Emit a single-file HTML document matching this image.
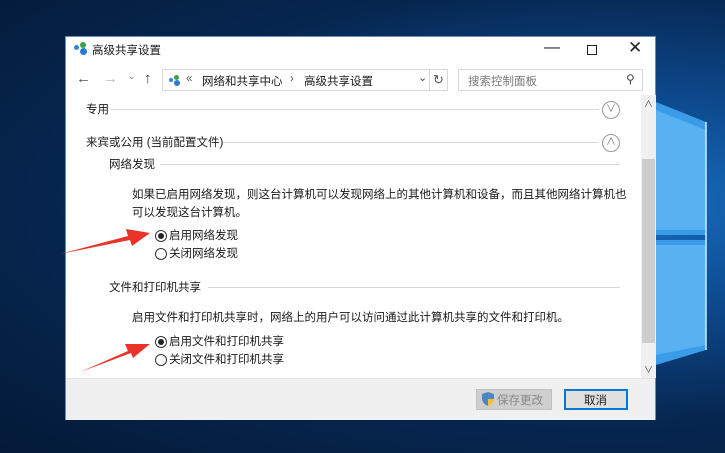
<!DOCTYPE html>
<html><head><meta charset="utf-8"><style>
*{margin:0;padding:0;box-sizing:border-box}
body{width:725px;height:453px;overflow:hidden;position:relative;font-family:"Liberation Sans","Noto Sans CJK SC",sans-serif;font-size:11.5px;color:#1a1a1a;
background:radial-gradient(ellipse at 85% 45%,#1a6fc0 0%,#0d4a8e 30%,#06264f 62%,#041a38 100%)}
.abs{position:absolute}
.win{left:65px;top:36px;width:591px;height:384px;background:#fff;border:1px solid #6b8cb4}
.t{position:absolute;white-space:nowrap}
.line{position:absolute;height:1px;background:#d8d8d8}
.circ{position:absolute;width:18px;height:18px;border:1px solid #999;border-radius:50%;color:#777;font-size:10px;text-align:center;line-height:15px}
.radio{position:absolute;width:12px;height:12px;border:1px solid #333;border-radius:50%;background:#fff}
.radio.on::after{content:"";position:absolute;left:2px;top:2px;width:6px;height:6px;border-radius:50%;background:#222}
</style></head><body>
<svg class="abs" style="left:656px;top:90px" width="69" height="290">
<polygon points="0,12 50,32 50,145 0,145" fill="#3a9be8"/>
<polygon points="0,150 50,150 50,260 0,275" fill="#3a9be8"/>
<polygon points="0,20 50,40 50,140 0,140" fill="#6cc0f5" opacity=".6"/>
<polygon points="0,155 50,155 50,255 0,265" fill="#6cc0f5" opacity=".6"/>
<line x1="50" y1="32" x2="50" y2="260" stroke="#cdeeff" stroke-width="1.5"/>
</svg>
<div class="abs win">
 <div class="abs" style="left:8px;top:8px;width:5px;height:5px;border-radius:50%;background:#2a8ad8"></div>
 <div class="abs" style="left:14px;top:5px;width:6px;height:6px;border-radius:50%;background:#3aa04a"></div>
 <div class="abs" style="left:14px;top:11px;width:7px;height:7px;border-radius:50%;background:#2a7ad0"></div>
 <div class="t" style="left:26px;top:5px">高级共享设置</div>
 <div class="t" style="left:478px;top:2px;font-size:16px;color:#222">—</div>
 <div class="abs" style="left:521px;top:8px;width:10px;height:10px;border:1px solid #222"></div>
 <div class="t" style="left:562px;top:1px;font-size:17px;color:#222">✕</div>
 <div class="t" style="left:10px;top:33px;font-size:15px;color:#555">←</div>
 <div class="t" style="left:37px;top:33px;font-size:15px;color:#bbb">→</div>
 <div class="t" style="left:62px;top:34px;font-size:9px;color:#777">⌄</div>
 <div class="t" style="left:78px;top:33px;font-size:15px;color:#444">↑</div>
 <div class="abs" style="left:96px;top:32px;width:286px;height:22px;border:1px solid #d9d9d9"></div>
 <div class="abs" style="left:103px;top:41px;width:4px;height:4px;border-radius:50%;background:#2a8ad8"></div>
 <div class="abs" style="left:108px;top:38px;width:5px;height:5px;border-radius:50%;background:#3aa04a"></div>
 <div class="abs" style="left:108px;top:43px;width:6px;height:6px;border-radius:50%;background:#2a7ad0"></div>
 <div class="t" style="left:120px;top:36px;color:#555">«</div>
 <div class="t" style="left:136px;top:36px">网络和共享中心</div>
 <div class="t" style="left:224px;top:36px;color:#555">›</div>
 <div class="t" style="left:238px;top:36px">高级共享设置</div>
 <div class="t" style="left:352px;top:34px;font-size:11px;color:#444">⌄</div>
 <div class="abs" style="left:363px;top:32px;width:1px;height:22px;background:#d9d9d9"></div>
 <div class="t" style="left:367px;top:35px;font-size:13px;color:#555">↻</div>
 <div class="abs" style="left:392px;top:32px;width:185px;height:22px;border:1px solid #d9d9d9"></div>
 <div class="t" style="left:402px;top:36px;color:#777">搜索控制面板</div>
 <div class="t" style="left:560px;top:35px;font-size:12px;color:#444">⚲</div>
 <div class="t" style="left:20px;top:64px">专用</div>
 <div class="line" style="left:45px;top:72px;width:488px"></div>
 <div class="circ" style="left:536px;top:64px">∨</div>
 <div class="t" style="left:20px;top:97px">来宾或公用 (当前配置文件)</div>
 <div class="line" style="left:157px;top:105px;width:376px"></div>
 <div class="circ" style="left:536px;top:97px">∧</div>
 <div class="t" style="left:43px;top:119px">网络发现</div>
 <div class="line" style="left:94px;top:127px;width:460px"></div>
 <div class="t" style="left:66px;top:149px">如果已启用网络发现，则这台计算机可以发现网络上的其他计算机和设备，而且其他网络计算机也</div>
 <div class="t" style="left:66px;top:167px">可以发现这台计算机。</div>
 <div class="radio on" style="left:89px;top:193px"></div>
 <div class="t" style="left:103px;top:190px">启用网络发现</div>
 <div class="radio" style="left:89px;top:211px"></div>
 <div class="t" style="left:103px;top:208px">关闭网络发现</div>
 <div class="t" style="left:43px;top:242px">文件和打印机共享</div>
 <div class="line" style="left:142px;top:250px;width:412px"></div>
 <div class="t" style="left:66px;top:272px">启用文件和打印机共享时，网络上的用户可以访问通过此计算机共享的文件和打印机。</div>
 <div class="radio on" style="left:89px;top:299px"></div>
 <div class="t" style="left:103px;top:296px">启用文件和打印机共享</div>
 <div class="radio" style="left:89px;top:317px"></div>
 <div class="t" style="left:103px;top:314px">关闭文件和打印机共享</div>
 <div class="abs" style="left:575px;top:58px;width:15px;height:283px;background:#f0f0f0"></div>
 <div class="abs" style="left:576px;top:122px;width:13px;height:184px;background:#cdcdcd"></div>
 <div class="t" style="left:578px;top:60px;font-size:9px;color:#444">∧</div>
 <div class="t" style="left:578px;top:326px;font-size:9px;color:#444">∨</div>
 <div class="abs" style="left:0;top:341px;width:589px;height:42px;background:#f0f0f0;border-top:1px solid #e3e3e3"></div>
 <div class="abs" style="left:410px;top:352px;width:76px;height:21px;background:#cfcfcf;border:1px solid #c2c2c2"></div>
 <svg class="abs" style="left:416px;top:355px" width="12" height="14"><path d="M6 0L12 2V7C12 10 9 13 6 14C3 13 0 10 0 7V2Z" fill="#f0c030"/><path d="M6 0V14C3 13 0 10 0 7V2ZM6 7H12V2L6 0Z" fill="#4a86c8"/></svg>
 <div class="t" style="left:431px;top:355px;color:#888">保存更改</div>
 <div class="abs" style="left:498px;top:352px;width:64px;height:21px;background:#e1e1e1;border:2px solid #0078d7"></div>
 <div class="t" style="left:518px;top:355px">取消</div>
</div>
<svg class="abs" style="left:0;top:0" width="725" height="453">
<polygon points="60,254 128,236 126,229 150,233 132,246 130,240" fill="#e8322a"/>
<polygon points="80,372 128,351 125,344 150,344 133,358 131,353" fill="#e8322a"/>
</svg>
</body></html>
